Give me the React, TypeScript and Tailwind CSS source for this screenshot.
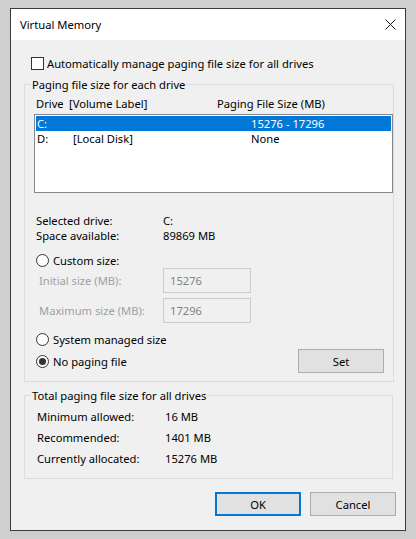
import type { ReactNode } from 'react'

function Checkbox() {
  return <span className="w-[13px] h-[13px] border border-[#333333] bg-white shrink-0" />
}

function Radio({ checked = false }: { checked?: boolean }) {
  return (
    <span className="w-[13px] h-[13px] rounded-full border border-[#333333] bg-white shrink-0 flex items-center justify-center">
      {checked && <span className="w-[7px] h-[7px] rounded-full bg-[#333333]" />}
    </span>
  )
}

function GroupBox({ title, className, children }: { title: string; className?: string; children: ReactNode }) {
  return (
    <fieldset className={`w-[369px] border border-[#dcdcdc] ${className ?? ''}`}>
      <legend className="ml-[6px] px-[1px] leading-[15px]">{title}</legend>
      {children}
    </fieldset>
  )
}

function Button({ label, isDefault = false }: { label: string; isDefault?: boolean }) {
  return (
    <button
      className={`w-[86px] h-[24px] bg-[#e1e1e1] flex items-center justify-center ${
        isDefault ? 'border-2 border-[#0078d7]' : 'border border-[#adadad]'
      }`}
    >
      {label}
    </button>
  )
}

const drives = [
  { drive: 'C:', label: '', size: '15276 - 17296', selected: true },
  { drive: 'D:', label: '[Local Disk]', size: 'None', selected: false },
]

const totals = [
  ['Minimum allowed:', '16 MB'],
  ['Recommended:', '1401 MB'],
  ['Currently allocated:', '15276 MB'],
]

export default function App() {
  return (
    <div className="w-[416px] h-[539px] bg-[#cfcfcf] pt-[8px] pl-[10px] font-['Noto_Sans',sans-serif] text-[11.2px] leading-[15px] text-black">
      <div className="w-[396px] h-[523px] border border-[#3c3c3c] bg-[#f0f0f0] flex flex-col">
        {/* title bar */}
        <div className="h-[31px] shrink-0 bg-white flex items-center justify-between pl-[9px] pr-[9px]">
          <span>Virtual Memory</span>
          <svg width="11" height="11" viewBox="0 0 11 11">
            <path d="M0.5 0.5 L10.5 10.5 M10.5 0.5 L0.5 10.5" stroke="#1a1a1a" strokeWidth="1" />
          </svg>
        </div>

        <div className="flex-1 pl-[13px] flex flex-col">
          <label className="mt-[17px] ml-[7px] h-[13px] flex items-center gap-[3px]">
            <Checkbox />
            <span>Automatically manage paging file size for all drives</span>
          </label>

          <GroupBox title="Paging file size for each drive" className="mt-[7px] pb-[8px]">
            <div className="mt-[4px] pl-[11px] flex">
              <span className="w-[33px]">Drive</span>
              <span className="w-[148px]">[Volume Label]</span>
              <span>Paging File Size (MB)</span>
            </div>

            <div className="mt-[3px] ml-[9px] w-[359px] h-[79px] border border-[#828790] bg-white p-[1px]">
              {drives.map((d) => (
                <div
                  key={d.drive}
                  className={`h-[15px] pl-[1px] flex items-center ${d.selected ? 'bg-[#0078d7] text-white' : ''}`}
                >
                  <span className="w-[36px]">{d.drive}</span>
                  <span className="w-[178px]">{d.label}</span>
                  <span>{d.size}</span>
                </div>
              ))}
            </div>

            <div className="mt-[20px] pl-[11px] flex">
              <span className="w-[127px]">Selected drive:</span>
              <span>C:</span>
            </div>
            <div className="pl-[11px] flex">
              <span className="w-[127px]">Space available:</span>
              <span>89869 MB</span>
            </div>

            <label className="mt-[10px] pl-[11px] flex items-center gap-[4px]">
              <Radio />
              <span>Custom size:</span>
            </label>
            <div className="pl-[14px] flex items-center h-[25px] text-[#a0a0a0]">
              <span className="w-[124px]">Initial size (MB):</span>
              <div className="w-[88px] h-[25px] border border-[#cccccc] pl-[6px] flex items-center text-[#838383]">15276</div>
            </div>
            <div className="mt-[5px] pl-[14px] flex items-center h-[25px] text-[#a0a0a0]">
              <span className="w-[124px]">Maximum size (MB):</span>
              <div className="w-[88px] h-[25px] border border-[#cccccc] pl-[6px] flex items-center text-[#838383]">17296</div>
            </div>

            <label className="mt-[9px] pl-[11px] flex items-center gap-[4px]">
              <Radio />
              <span>System managed size</span>
            </label>
            <div className="mt-[2px] pl-[11px] pr-[9px] h-[24px] flex items-center justify-between">
              <label className="flex items-center gap-[4px]">
                <Radio checked />
                <span>No paging file</span>
              </label>
              <Button label="Set" />
            </div>
          </GroupBox>

          <GroupBox title="Total paging file size for all drives" className="mt-[6px] pb-[12px]">
            {totals.map(([k, v]) => (
              <div key={k} className="mt-[6px] pl-[12px] flex">
                <span className="w-[128px]">{k}</span>
                <span>{v}</span>
              </div>
            ))}
          </GroupBox>

          <div className="mt-[13px] pr-[9px] flex justify-end gap-[9px]">
            <Button label="OK" isDefault />
            <Button label="Cancel" />
          </div>
        </div>
      </div>
    </div>
  )
}
